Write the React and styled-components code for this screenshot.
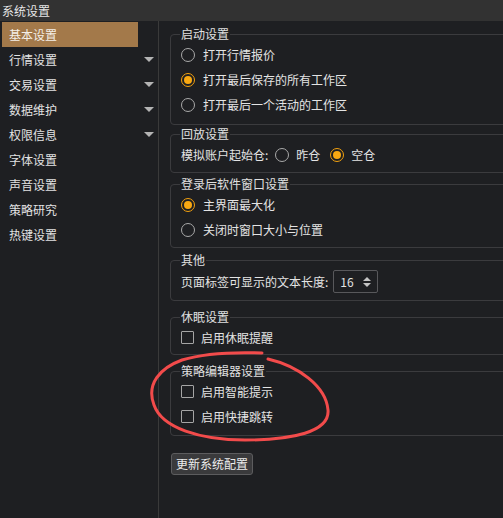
import React from "react";
import styled, { createGlobalStyle } from "styled-components";

const GlobalStyle = createGlobalStyle`
  html, body { margin: 0; padding: 0; background: #1e1f22; overflow: hidden; }
  body {
    font-family: "Noto Sans CJK SC", "Noto Sans", sans-serif;
    font-size: 12px;
    color: #e4e4e4;
  }
  * { box-sizing: border-box; }
`;

const Root = styled.div`
  position: relative;
  width: 503px;
  height: 518px;
  overflow: hidden;
  background: #1e1f22;
`;

const TitleBar = styled.div`
  height: 21px;
  line-height: 21px;
  padding-left: 2px;
  background: #323232;
  color: #e6e6e6;
  font-size: 12px;
`;

const Main = styled.div`
  display: flex;
  height: 497px;
`;

const Sidebar = styled.nav`
  width: 159px;
  flex: none;
  border-right: 1px solid #3a3a3a;
  padding: 1px 0 0 2px;
  display: flex;
  flex-direction: column;
`;

const NavRow = styled.div`
  display: grid;
  grid-template-columns: 136px 20px;
  height: 25px;
  align-items: center;
`;

const NavLabel = styled.div`
  height: 25px;
  line-height: 25px;
  padding-left: 7px;
  background: ${(p) => (p.$active ? "#a3794a" : "transparent")};
  color: ${(p) => (p.$active ? "#f4efe8" : "#e2e2e2")};
`;

const Caret = styled.span`
  justify-self: center;
  width: 0;
  height: 0;
  margin-left: 2px;
  border-left: 5px solid transparent;
  border-right: 5px solid transparent;
  border-top: 5px solid #b4b4b4;
`;

const Content = styled.div`
  flex: 1;
  min-width: 0;
  padding: 5px 0 0 11px;
  display: flex;
  flex-direction: column;
  align-items: stretch;
`;

const Group = styled.fieldset`
  margin: ${(p) => p.$mt || 0}px -12px 0 0;
  padding: 0 10px ${(p) => (p.$pb == null ? 6 : p.$pb)}px 10px;
  border: 1px solid #3b3b3e;
  border-radius: 4px;
  min-width: 0;
`;

const Legend = styled.legend`
  margin-left: -1px;
  padding: 0 1px;
  font-size: 12px;
  line-height: 16px;
  color: #e0e0e0;
`;

const Row = styled.label`
  display: flex;
  align-items: center;
  height: ${(p) => p.$h || 25}px;
  gap: ${(p) => p.$gap || 8}px;
  white-space: nowrap;
`;

const RadioDot = styled.span`
  width: 14px;
  height: 14px;
  flex: none;
  border-radius: 50%;
  border: 1.5px solid ${(p) => (p.$on ? "#f3a10f" : "#a9a9a9")};
  display: flex;
  align-items: center;
  justify-content: center;
  &::after {
    content: "";
    width: 8px;
    height: 8px;
    border-radius: 50%;
    background: ${(p) => (p.$on ? "#f8a812" : "transparent")};
  }
`;

const Check = styled.span`
  width: 13px;
  height: 13px;
  flex: none;
  border: 1px solid #a5a5a5;
  border-radius: 1px;
`;

const InlineLabel = styled.span`
  margin-right: ${(p) => p.$mr || 0}px;
`;

const Spin = styled.div`
  width: 45px;
  height: 23px;
  border: 1px solid #58585b;
  border-radius: 2px;
  display: flex;
  align-items: center;
  justify-content: space-between;
  padding: 0 6px 0 6px;
  margin-left: -3px;
`;

const SpinArrows = styled.div`
  display: flex;
  flex-direction: column;
  gap: 2px;
`;

const Tri = styled.span`
  width: 0;
  height: 0;
  border-left: 4px solid transparent;
  border-right: 4px solid transparent;
  ${(p) =>
    p.$up
      ? "border-bottom: 4px solid #c4c4c4;"
      : "border-top: 4px solid #c4c4c4;"}
`;

const Button = styled.button`
  align-self: flex-start;
  margin: 17px 0 0 1px;
  height: 22px;
  padding: 0 4px;
  background: #3a3a3c;
  border: 1px solid #5c5c5e;
  border-radius: 3px;
  color: #ececec;
  font-family: inherit;
  font-size: 12px;
  line-height: 20px;
`;

const Annotation = styled.svg`
  position: absolute;
  left: 0;
  top: 0;
  pointer-events: none;
`;

const nav = [
  { t: "基本设置", active: true },
  { t: "行情设置", arrow: true },
  { t: "交易设置", arrow: true },
  { t: "数据维护", arrow: true },
  { t: "权限信息", arrow: true },
  { t: "字体设置" },
  { t: "声音设置" },
  { t: "策略研究" },
  { t: "热键设置" },
];

function Radio({ on, children }) {
  return (
    <Row>
      <RadioDot $on={on} />
      <span>{children}</span>
    </Row>
  );
}

function CheckRow({ children }) {
  return (
    <Row $gap={7}>
      <Check />
      <span>{children}</span>
    </Row>
  );
}

export default function App() {
  return (
    <Root>
      <GlobalStyle />
      <TitleBar>系统设置</TitleBar>
      <Main>
        <Sidebar>
          {nav.map((n) => (
            <NavRow key={n.t}>
              <NavLabel $active={n.active}>{n.t}</NavLabel>
              {n.arrow ? <Caret /> : <span />}
            </NavRow>
          ))}
        </Sidebar>
        <Content>
          <Group $pb={7}>
            <Legend>启动设置</Legend>
            <Radio>打开行情报价</Radio>
            <Radio on>打开最后保存的所有工作区</Radio>
            <Radio>打开最后一个活动的工作区</Radio>
          </Group>
          <Group $mt={1} $pb={5}>
            <Legend>回放设置</Legend>
            <Row $gap={7}>
              <InlineLabel>模拟账户起始仓:</InlineLabel>
              <RadioDot />
              <InlineLabel $mr={3}>昨仓</InlineLabel>
              <RadioDot $on />
              <InlineLabel>空仓</InlineLabel>
            </Row>
          </Group>
          <Group $mt={3} $pb={5}>
            <Legend>登录后软件窗口设置</Legend>
            <Radio on>主界面最大化</Radio>
            <Radio>关闭时窗口大小与位置</Radio>
          </Group>
          <Group $mt={4} $pb={5}>
            <Legend>其他</Legend>
            <Row $h={27} $gap={8}>
              <InlineLabel>页面标签可显示的文本长度:</InlineLabel>
              <Spin>
                <span>16</span>
                <SpinArrows>
                  <Tri $up />
                  <Tri />
                </SpinArrows>
              </Spin>
            </Row>
          </Group>
          <Group $mt={8} $pb={4}>
            <Legend>休眠设置</Legend>
            <CheckRow>启用休眠提醒</CheckRow>
          </Group>
          <Group $mt={8} $pb={6}>
            <Legend>策略编辑器设置</Legend>
            <CheckRow>启用智能提示</CheckRow>
            <CheckRow>启用快捷跳转</CheckRow>
          </Group>
          <Button>更新系统配置</Button>
        </Content>
      </Main>
      <Annotation width="503" height="518" viewBox="0 0 503 518">
        <path
          d="M 268 359 C 298 366, 326 386, 328 410 C 330 432, 292 440, 245 440 C 200 440, 162 428, 154 405 C 146 384, 160 368, 182 360 C 205 353, 235 352, 262 353"
          fill="none"
          stroke="#f24b4b"
          strokeWidth="3"
          strokeLinecap="round"
          strokeLinejoin="round"
        />
      </Annotation>
    </Root>
  );
}
